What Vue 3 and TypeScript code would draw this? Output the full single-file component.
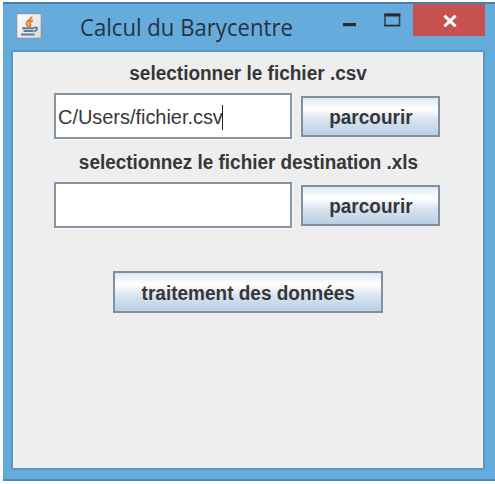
<script setup lang="ts">
import { ref } from 'vue'

const source = ref<string>('C/Users/fichier.csv')
const destination = ref<string>('')
</script>

<template>
  <main class="window">
    <header class="titlebar">
      <svg class="java" viewBox="0 0 26 26">
        <defs>
          <linearGradient id="tile" x1="0" y1="0" x2="1" y2="1">
            <stop offset="0" stop-color="#ffffff" />
            <stop offset="1" stop-color="#d9dadb" />
          </linearGradient>
        </defs>
        <rect x=".7" y=".7" width="24.6" height="24.6" rx="1.5" fill="url(#tile)" stroke="#8d979e" stroke-width="1.2" />
        <path d="M15.5 3.5C16 6.8 9.3 8 10.5 11.2C11 12.4 12 13 12.4 14M17 7.3C13.5 8.8 12.8 10 14 11.4C14.8 12.5 14.4 13.3 13.5 14" fill="none" stroke="#e8802f" stroke-width="2.1" />
        <path d="M6 15.2H18M7.5 18H17M18 14.7C22.2 13.4 22 17.4 17.6 18.5M5 21.5H18.5" fill="none" stroke="#587e9b" stroke-width="1.9" />
      </svg>
      <h1 class="title"><span>Calcul du Barycentre</span></h1>
      <div class="controls">
        <svg class="minmax" viewBox="0 0 70 32">
          <rect x="0" y="19" width="13" height="3.2" fill="#292b2d" />
          <path d="M42 11V21.5H56.5V11" fill="none" stroke="#35464f" stroke-width="1.6" />
          <path d="M41.2 21.6H57.3" stroke="#292b2d" stroke-width="1.4" />
          <rect x="41.2" y="9.4" width="16.2" height="3.1" fill="#292b2d" />
        </svg>
        <button class="close" aria-label="Fermer">
          <svg viewBox="0 0 14 12"><path d="M1.4 .6L12.6 11.4M12.6 .6L1.4 11.4" stroke="#fff" stroke-width="2.9" /></svg>
        </button>
      </div>
    </header>
    <section class="panel">
      <p class="label first"><span>selectionner le fichier .csv</span></p>
      <div class="row">
        <div class="field"><span class="value">{{ source }}</span><i class="caret"></i></div>
        <button class="btn"><span>parcourir</span></button>
      </div>
      <p class="label second"><span>selectionnez le fichier destination .xls</span></p>
      <div class="row">
        <div class="field"><span class="value">{{ destination }}</span></div>
        <button class="btn"><span>parcourir</span></button>
      </div>
      <button class="btn wide"><span>traitement des données</span></button>
    </section>
  </main>
</template>

<style>
body { margin: 0; background: #fff; overflow: hidden; }
</style>

<style scoped>
* { box-sizing: border-box; }
.window {
  width: 492px;
  height: 479px;
  margin: 2px 0 0 3px;
  padding: 0 10px 11px 8px;
  background: #65acdd;
  border-top: 2px solid #427fac;
  border-bottom: 2px solid #4b8ab5;
  box-shadow: 0 1px 2px #ddd;
  font-family: "Liberation Sans", Arial, sans-serif;
}
.titlebar { display: flex; height: 46px; }
.java { width: 26px; height: 26px; margin: 9px 0 0 5px; flex: none; }
.title {
  margin: 3px 0 0 38px;
  width: 225px;
  font: 400 24px/40px "Open Sans", sans-serif;
  color: #27333d;
  white-space: nowrap;
}
.title span { display: inline-block; transform: scaleX(.922); transform-origin: left; }
.controls { display: flex; margin-left: auto; }
.minmax { width: 70px; height: 32px; }
.close {
  display: flex;
  align-items: center;
  justify-content: center;
  width: 72px;
  height: 32px;
  padding: 0 0 0 1px;
  border: 0;
  background: #c75150;
}
.close svg { width: 14px; height: 12px; margin-top: 2px; }
.panel {
  height: 420px;
  background: #eee;
  border: 2px solid #5a99c4;
  display: flex;
  flex-direction: column;
}
.label {
  margin: 0;
  height: 41px;
  font-size: 20px;
  font-weight: 700;
  line-height: 43px;
  text-align: center;
  color: #383639;
  white-space: nowrap;
}
.label span, .btn span { display: inline-block; transform: scaleX(.95); }
.second { height: 43px; line-height: 47px; }
.second span { transform: scaleX(.945); }
.row { display: flex; align-items: center; gap: 9px; height: 46px; padding-left: 41px; }
.field {
  display: flex;
  align-items: center;
  width: 238px;
  height: 46px;
  padding: 3px 0 0 2px;
  background: #fff;
  border: 2px solid #8494a3;
  box-shadow: 1px 1px 0 #fbfbfb;
  font-size: 20px;
  color: #38363b;
}
.value { white-space: nowrap; letter-spacing: -.04px; }
.caret { width: 1px; height: 25px; margin: -1px 0 0 -1px; background: #222; }
.btn {
  width: 139px;
  height: 41px;
  padding: 2px 0 0;
  border: 2px solid #8090a0;
  background: linear-gradient(#dfe9f3 0%, #ffffff 29%, #fbfcfe 34%, #d9e5f0 58%, #bacfe3 100%);
  font: 700 20px "Liberation Sans", Arial, sans-serif;
  color: #383639;
  white-space: nowrap;
}
.wide { width: 270px; height: 42px; margin: 43px 0 0 100px; }
</style>
